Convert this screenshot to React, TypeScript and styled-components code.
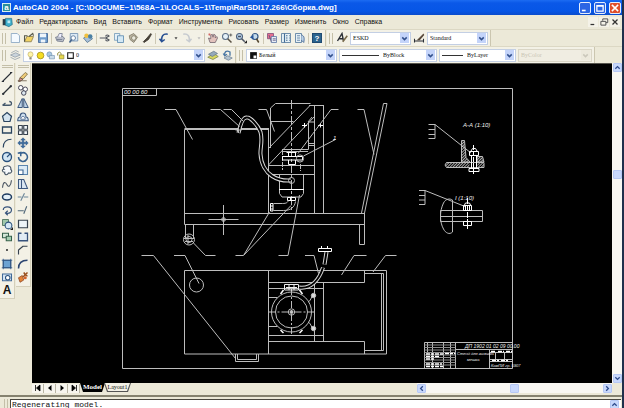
import React from "react";
import styled, { createGlobalStyle } from "styled-components";

const GlobalStyle = createGlobalStyle`
  * { box-sizing: border-box; }
  html, body { margin: 0; padding: 0; overflow: hidden; }
  body { font-family: "Liberation Sans", Arial, sans-serif; font-size: 7px; color: #111; }
  button, select, input { font: inherit; color: inherit; margin: 0; padding: 0; border: 0; background: none; }
`;

const Window = styled.div`
  display: flex;
  flex-direction: column;
  height: 100vh;
  background: #ece9d8;
  border-right: 2px solid #20304c;
`;

const TitleBar = styled.header`
  display: flex;
  align-items: center;
  gap: 2px;
  height: 15px;
  flex: none;
  padding: 0 1px 0 2px;
  background: linear-gradient(#1c6cf2 0, #0a58e8 3px, #0656e6 11px, #0a4ccc 15px);
`;

const AppBadge = styled.span`
  width: 9px;
  height: 9px;
  border: 1px solid #d8f0f0;
  background: #2a8f9c;
  color: #fff;
  font-size: 8px;
  font-weight: bold;
  line-height: 7px;
  text-align: center;
`;

const Title = styled.h1`
  flex: 1;
  margin: 0;
  color: #fff;
  font-family: "Liberation Sans", Arial, sans-serif;
  font-size: 8px;
  font-weight: 700;
  line-height: 12px;
  white-space: nowrap;
`;

const CaptionButton = styled.button<{ $danger?: boolean }>`
  display: flex;
  width: 12px;
  height: 12px;
  margin-left: 1px;
  border: 1px solid #e6eefc;
  border-radius: 2px;
  background: ${(p) => (p.$danger ? "#e0502c" : "#2c66e4")};
  svg { width: 10px; height: 10px; }
`;

const MenuBar = styled.nav`
  display: flex;
  align-items: center;
  gap: 6px;
  height: 14px;
  flex: none;
  padding: 0 2px;
  line-height: 12px;
`;

const DocMark = styled.span`
  display: flex;
  width: 11px;
  margin-right: -3px;
  svg { width: 11px; height: 11px; }
`;

const MenuItem = styled.button`
  white-space: nowrap;
`;

const MdiButtons = styled.div`
  display: flex;
  margin-left: auto;
  gap: 1px;
`;

const MdiButton = styled.button`
  display: flex;
  width: 10px;
  height: 10px;
  background: #f4f2e8;
  svg { width: 10px; height: 10px; }
`;

const ToolRow = styled.div`
  display: flex;
  flex: none;
  height: 17px;
  gap: 1px;
  border-top: 1px solid #dcd8c4;
`;

const Bar = styled.div`
  display: flex;
  align-items: center;
  gap: 2px;
  padding: 0 2px;
  background: #f3f1e6;
  border-right: 1px solid #cbc6b0;
`;

const Grip = styled.span`
  width: 4px;
  height: 11px;
  margin-right: 1px;
  border-left: 1px solid #c4bfa8;
  border-right: 1px solid #c4bfa8;
`;

const Divider = styled.span`
  width: 1px;
  height: 11px;
  background: #cdc8b4;
`;

const ToolButton = styled.button<{ $narrow?: boolean }>`
  display: flex;
  flex: none;
  justify-content: center;
  align-items: center;
  width: ${(p) => (p.$narrow ? 7 : 12)}px;
  height: 12px;
  svg { width: 12px; height: 12px; flex: none; }
`;

const ComboBox = styled.label<{ $width: number; $disabled?: boolean }>`
  display: flex;
  align-items: center;
  gap: 1px;
  width: ${(p) => p.$width}px;
  height: 13px;
  padding: 1px 1px 1px 2px;
  border: 1px solid ${(p) => (p.$disabled ? "#dad6c6" : "#c3cfe4")};
  background: ${(p) => (p.$disabled ? "#f0ede2" : "#fff")};
  color: ${(p) => (p.$disabled ? "#c9c5b4" : "#111")};
  font-family: "Liberation Serif", "Times New Roman", serif;
  font-size: 6px;
  svg { width: 9px; height: 9px; flex: none; }
`;

const Select = styled.select`
  appearance: none;
  flex: 1;
  min-width: 0;
  height: 10px;
  line-height: 10px;
  outline: 0;
  opacity: 1;
`;

const Sample = styled.span<{ $width: number }>`
  width: ${(p) => p.$width}px;
  height: 1px;
  margin-right: 3px;
  background: #333;
`;

const Drop = styled.span<{ $disabled?: boolean }>`
  display: flex;
  align-items: center;
  justify-content: center;
  width: 9px;
  height: 10px;
  flex: none;
  background: ${(p) => (p.$disabled ? "#ece9dc" : "#c4d4fa")};
  color: ${(p) => (p.$disabled ? "#cbc8bb" : "#32508c")};
`;

const Workspace = styled.div`
  display: flex;
  flex: 1;
  min-height: 0;
`;

const Palettes = styled.aside`
  display: flex;
  align-items: flex-start;
  width: 32px;
  flex: none;
`;

const Palette = styled.div`
  display: flex;
  flex-direction: column;
  align-items: center;
  width: 15px;
  margin-right: 1px;
  padding: 2px 0 2px;
  gap: 2px;
  background: #f3f1e6;
  border: 1px solid #d4cfba;
  border-width: 0 1px 1px 0;
`;

const PaletteGrip = styled.span`
  width: 11px;
  height: 3px;
  border-top: 1px solid #c4bfa8;
  border-bottom: 1px solid #c4bfa8;
`;

const PaletteGroup = styled.div`
  display: flex;
  flex-direction: column;
  padding-bottom: 1px;
  button { height: 13px; }
`;

const DrawingPane = styled.main`
  display: flex;
  flex-direction: column;
  flex: 1;
  min-width: 0;
`;

const CanvasRow = styled.div`
  display: flex;
  flex: 1;
  min-height: 0;
`;

const Canvas = styled.div`
  flex: 1;
  min-width: 0;
  background: #000;
  border-top: 1px solid #55534c;
  svg { display: block; width: 100%; height: 100%; }
`;

const ScrollTrack = styled.div<{ $horizontal?: boolean }>`
  display: flex;
  flex: none;
  flex-direction: ${(p) => (p.$horizontal ? "row" : "column")};
  align-items: center;
  ${(p) => (p.$horizontal ? "width: 195px; height: 10px;" : "width: 10px;")}
  background: #f8f7f2;
`;

const Space = styled.span<{ $grow?: number }>`
  flex: ${(p) => p.$grow ?? 1};
`;

const ScrollButton = styled.button`
  display: flex;
  flex: none;
  align-items: center;
  justify-content: center;
  width: 9px;
  height: 9px;
  border: 1px solid #b6c8f4;
  border-radius: 1px;
  background: #c8d8fc;
  color: #2f4c8c;
  svg { width: 7px; height: 7px; flex: none; }
`;

const BottomRow = styled.div`
  display: flex;
  flex: none;
  height: 12px;
  padding-right: 10px;
`;

const TabNav = styled.div`
  display: flex;
  align-items: center;
  height: 10px;
  button {
    display: flex;
    width: 12px;
    height: 9px;
    justify-content: center;
    align-items: center;
    border-right: 1px solid #b9b5a4;
    background: #f7f5ee;
  }
  svg { width: 8px; height: 8px; }
`;

const Tab = styled.button<{ $active?: boolean }>`
  height: 9px;
  width: ${(p) => (p.$active ? 25 : 27)}px;
  background: ${(p) => (p.$active ? "#000" : "#555")};
  clip-path: polygon(0 0, 100% 0, calc(100% - 3px) 100%, 3px 100%);
  color: ${(p) => (p.$active ? "#fff" : "#111")};
  font-family: "Liberation Serif", serif;
  font-size: ${(p) => (p.$active ? 7 : 6)}px;
  font-weight: ${(p) => (p.$active ? 700 : 400)};
  line-height: 8px;
  padding: 0 1px 1px;
  margin-right: -1px;
  span {
    display: block;
    height: 8px;
    background: ${(p) => (p.$active ? "#000" : "#f3f1e6")};
    clip-path: polygon(0 0, 100% 0, calc(100% - 3px) 100%, 3px 100%);
  }
`;

const CommandPane = styled.section`
  display: flex;
  flex: none;
  height: 13px;
  padding: 2px 1px 0 4px;
  border-top: 2px solid #85826f;
`;

const CommandBox = styled.div`
  display: flex;
  flex: 1;
  margin-left: 1px;
  padding-right: 2px;
  border-top: 1px solid #4a4840;
  border-left: 1px solid #4a4840;
  background: #fff;
`;

const CommandInput = styled.input`
  flex: 1;
  min-width: 0;
  height: 8px;
  padding-left: 1px;
  outline: 0;
  font-family: "Liberation Mono", "Courier New", monospace;
  font-size: 8px;
  line-height: 8px;
`;

const HelpBadge = styled.span`
  width: 10px;
  height: 10px;
  background: #2c648e;
  border: 1px solid #1f4a72;
  color: #fff;
  font-size: 8px;
  font-weight: 700;
  line-height: 9px;
  text-align: center;
`;

const TextGlyph = styled.span`
  font-size: 12px;
  line-height: 12px;
  font-weight: 700;
`;

const K = "#2a2f36";
const B = "#3c6da0";

const glyphs: Record<string, React.ReactNode> = {
  newFile: <path d="M3 2h8l3 3v9H3z" fill="#f4faff" stroke="#7c9cbc" />,
  open: <><path d="M2 13l3-7h9l-3 7z" fill="#f0d264" stroke="#83754a" /><path d="M2 13V5h4M8 6l5-4 1 3" fill="none" stroke="#55584a" strokeWidth="1.4" /></>,
  save: <><path d="M2 2h12v12H2z" fill="#6f9ccc" stroke="#345a8c" /><path d="M4 2h8v5H4zM5 10h6v4H5z" fill="#eef5fb" /></>,
  print: <><path d="M2 7l8-2 4 3-2 5-8-1z" fill="#b9bdc8" stroke="#6a7184" /><path d="M5 6l2-4h4l-1 5M4 10h7" fill="#eef" stroke="#6a7184" /></>,
  preview: <><path d="M3 2h10v10H3z" fill="#dceaf6" stroke="#6485ac" /><circle cx="7" cy="8" r="3" fill="#fff" stroke="#46658c" /><path d="M5 10l-3 4" stroke="#46658c" strokeWidth="2" /></>,
  publish: <><path d="M2 8l8-4 4 5-7 5z" fill="#a8c0d8" stroke="#4b6c8c" /><circle cx="6" cy="5" r="3" fill="#f0c040" /><circle cx="11" cy="6" r="3" fill="#4a80a4" /></>,
  cut: <path d="M1 8h8l5-3M9 8l5 3M9 6a2 2 0 114 0M9 10a2 2 0 104 0" fill="none" stroke="#50555e" strokeWidth="1.6" />,
  copy: <><path d="M2 2h7v9H2z" fill="#e4f0f8" stroke="#6a93b4" /><path d="M6 5h8v9H6z" fill="#d4e8f4" stroke="#4f80aa" /></>,
  paste: <><path d="M3 5l6-3 5 5-5 7-5-4z" fill="#bdb7a4" stroke="#77725f" /><circle cx="9" cy="8" r="3" fill="#e9e8dc" stroke="#77725f" /></>,
  brush: <path d="M13 2L8 8l-5 5 1 1 6-4 4-7z" fill="#4a4338" stroke="#37322b" />,
  undo: <path d="M13 3C7 2 4 5 5 13M2 9l3 4 4-3" fill="none" stroke="#274f92" strokeWidth="2" />,
  redo: <path d="M3 3c6-1 9 2 8 10M14 9l-3 4-4-3" fill="none" stroke="#c7cbd0" strokeWidth="2" />,
  drop: <path d="M6 7h4l-2 3z" fill="#444" />,
  dropOff: <path d="M6 7h4l-2 3z" fill="#bbb" />,
  pan: <><path d="M4 14l-2-6 3 1V4l2-1 1 4 1-4 2 1v4l2-2 1 2-3 6z" fill="#e3c3bd" stroke="#6b5d68" /><path d="M2 3h3M3 2v3" stroke="#c44" /></>,
  zoomRt: <><circle cx="6" cy="6" r="4" fill="#e6f2fa" stroke="#5b6f88" strokeWidth="1.4" /><path d="M9 9l5 5" stroke="#5a5245" strokeWidth="2" /><path d="M11 4h4M13 2v4" stroke="#444" /></>,
  zoomWin: <><circle cx="6" cy="6" r="4" fill="#bcd5ea" stroke="#4d607c" strokeWidth="1.4" /><path d="M4 6h4M9 9l4 4" stroke="#4d5564" strokeWidth="2" /><path d="M12 15h4v-4z" fill="#222" /></>,
  zoomPrev: <><circle cx="8" cy="6" r="4" fill="#c6dcec" stroke="#345886" strokeWidth="1.6" /><path d="M10 9l3 5" stroke="#54462f" strokeWidth="2" /><path d="M1 7l5-3v6z" fill="#28579b" /></>,
  props: <><path d="M2 2h8v7H2z" fill="#e66f90" stroke="#7a4a76" /><path d="M7 6h7v8H7z" fill="#e7eef8" stroke="#5470a0" /><path d="M4 4l3 9M9 9h4M9 11h4" stroke="#594d77" /></>,
  center: <><path d="M2 2h12v12H2z" fill="#e6f0f6" stroke="#456e96" /><path d="M6 2v12M8 5h2M12 5h1M8 8h2M12 8h1M8 11h2M12 11h1" stroke="#456e96" strokeWidth="1.5" /></>,
  palettes: <><path d="M2 2h8v12H2z" fill="#e6f0f6" stroke="#456e96" /><path d="M4 5h4M4 8h4M4 11h4" stroke="#456e96" /><path d="M10 4c4 1 4 5 3 10l-3-3" fill="#bcd0e6" stroke="#31588b" /></>,
  textStyle: <><path d="M2 12L8 2l2 10M4 9h6" fill="none" stroke={K} strokeWidth="1.8" /><path d="M9 13l6-8" stroke="#776a4b" strokeWidth="2" /></>,
  dimStyle: <><path d="M2 12h12M2 9v5M14 9v5" stroke={K} strokeWidth="1.4" /><path d="M5 11l3-3 6-6 1 2-6 7z" fill="#57483a" /></>,
  layers: <><path d="M2 8l7-3 6 3-7 3z" fill="#cad4dc" stroke="#8d99a4" /><path d="M2 11l6 3 7-3M3 5l6-3 4 2" fill="none" stroke="#8d99a4" /></>,
  bulb: <><circle cx="8" cy="6" r="4.5" fill="#fff4a8" stroke="#b5a25a" /><path d="M6 11h4v4H6z" fill="#8f8c7c" /></>,
  sun: <circle cx="8" cy="8" r="6" fill="#f5dc20" stroke="#a79424" strokeWidth="1.5" />,
  vpSun: <><circle cx="6" cy="6" r="4.5" fill="#a9c8e2" stroke="#6686a8" /><path d="M6 8h9v6H6z" fill="#c9dbe9" stroke="#6686a8" /></>,
  lock: <><path d="M6 7h8v7H6z" fill="#e6d84c" stroke="#76702a" /><path d="M3 8V4l3-2 3 2v3" fill="none" stroke="#8b8430" strokeWidth="1.6" /></>,
  swatch: <path d="M3 3h10v10H3z" fill="#fff" stroke="#222" strokeWidth="2" />,
  bw: <><path d="M2 2h12v12H2z" fill="#111" /><path d="M8 8h5v5H8z" fill="#fff" /></>,
  layerObj: <><path d="M1 11l8-5 6 4-7 4z" fill="#d7d75e" stroke="#78804a" /><path d="M2 7l7-4 5 3-7 4z" fill="#94a9bb" stroke="#667888" /></>,
  layerPrev: <><path d="M4 12l5-3 6 3-5 3z" fill="#b4c3cf" stroke="#6f8395" /><path d="M12 9V4c-5-3-8 0-7 5M3 6l2 3 3-2" fill="none" stroke="#4c78a4" strokeWidth="1.8" /></>,
  line: <path d="M2 14L14 2M1 14h3M12 2h3" fill="none" stroke={K} strokeWidth="1.5" />,
  xline: <><path d="M2 14L14 2" stroke={K} strokeWidth="1.7" /><circle cx="3" cy="13" r="1.5" fill={K} /><circle cx="13" cy="3" r="1.5" fill={K} /></>,
  pline: <path d="M2 11h9c4 0 4-5 0-5M2 11l4-3" fill="none" stroke="#44586c" strokeWidth="1.7" />,
  polygon: <path d="M8 2l6 5-2 7H4L2 7z" fill="#d4e4f0" stroke="#2b4560" strokeWidth="1.6" />,
  rect: <path d="M2 4h12v8H2z" fill="none" stroke="#2b4560" strokeWidth="1.7" />,
  arc: <path d="M3 14C3 7 7 3 14 3" fill="none" stroke="#2b4560" strokeWidth="1.6" />,
  circle: <><circle cx="8" cy="8" r="6" fill="#d2e6f4" stroke="#28507c" strokeWidth="1.8" /><path d="M8 8l4-4" stroke="#28507c" strokeWidth="1.5" /></>,
  cloud: <path d="M6 3c4-2 8 1 7 4 3 3 0 6-3 5-2 4-6 2-5-1-4 0-4-4-1-4-2-2 0-4 2-4z" fill="#f6f9fb" stroke="#495868" strokeWidth="1.5" />,
  spline: <path d="M2 13c1-9 4-8 6-4s5 2 6-6" fill="none" stroke="#4b5663" strokeWidth="1.5" />,
  ellipse: <ellipse cx="8" cy="8" rx="6" ry="4" fill="#e4f0f8" stroke="#1f3c60" strokeWidth="2" />,
  earc: <path d="M3 8c0-6 11-5 11 0 0 4-4 5-7 4M9 9l-3 3 3 3" fill="none" stroke="#38547c" strokeWidth="1.6" />,
  insert: <><path d="M2 2h8v8H2z" fill="#9fc7aa" stroke="#35604a" /><circle cx="10" cy="10" r="4.500" fill="#d6e8f4" stroke="#28507c" strokeWidth="1.4" /><path d="M12 16h4v-4z" fill="#222" /></>,
  block: <><path d="M2 3h8v6H2z" fill="#d7e8da" stroke="#35604a" strokeWidth="1.4" /><path d="M7 7h7v6H7z" fill="#a6ceb2" stroke="#35604a" strokeWidth="1.4" /></>,
  point: <circle cx="8" cy="8" r="1.4" fill="#333" />,
  hatch: <><path d="M3 3h10v10H3z" fill="#6ca2d2" stroke="#2d5382" strokeWidth="1.4" /><path d="M1 3h14M1 13h14M3 1v14M13 1v14" stroke="#2d5382" /></>,
  region: <><path d="M2 4h12v9H2z" fill="#d6e6f4" stroke="#416a98" strokeWidth="1.4" /><circle cx="9" cy="9" r="3" fill="#fff" stroke="#28507c" strokeWidth="1.4" /></>,
  erase: <><path d="M4 9l7-7 3 2-6 7z" fill="#eecb78" stroke="#72633d" /><path d="M1 13h12M4 9l4 2-4 3H2z" fill="#db8f8f" stroke="#61503d" /></>,
  copyObj: <><circle cx="5" cy="5" r="3" fill="#fff" stroke="#445" strokeWidth="1.3" /><circle cx="11" cy="7" r="3" fill="#fff" stroke="#445" strokeWidth="1.3" /><circle cx="9" cy="12" r="3" fill="#dde8f0" stroke="#445" strokeWidth="1.3" /></>,
  mirror: <path d="M7 2v12H1zM9 2v12h6z" fill="#bdd2e6" stroke="#38547c" strokeWidth="1.3" />,
  offset: <><path d="M1 13c0-4 2-5 3-5 0-7 8-7 8 0 2 0 3 2 3 5z" fill="#cfe0ef" stroke="#38547c" strokeWidth="1.4" /><path d="M5 11c0-5 6-5 6 0z" fill="#fff" stroke="#38547c" /></>,
  array: <path d="M2 2h5v5H2zM9 2h5v5H9zM2 9h5v5H2zM9 9h5v5H9z" fill="#f4f8fb" stroke="#37424f" strokeWidth="1.5" />,
  move: <path d="M8 1l3 3H9v3h3V5l3 3-3 3V9H9v3h2l-3 3-3-3h2V9H4v2L1 8l3-3v2h3V4H5z" fill={B} stroke="#264f7e" strokeWidth=".6" />,
  rotate: <path d="M4 4c6-5 12 2 9 7-3 5-11 3-11-3M1 3l4-1v5" fill="none" stroke="#38628f" strokeWidth="2" />,
  scale: <><path d="M2 2h12v12H2z" fill="#dcebf6" stroke="#5c86ae" strokeWidth="1.4" /><path d="M2 8h6v6H2z" fill="#fff" stroke="#38628f" strokeWidth="1.4" /></>,
  stretch: <path d="M2 2h4v12H2zM6 2h3l5 12H6z" fill="#dbe7f2" stroke="#3e5980" strokeWidth="1.4" />,
  trim: <path d="M1 8h5M9 8h6M5 13l5-10" fill="none" stroke="#6d8799" strokeWidth="1.5" />,
  extend: <path d="M1 9h8M9 13l4-10" fill="none" stroke="#52687a" strokeWidth="1.5" />,
  breakPt: <path d="M2 3h12v10H2z" fill="#eef4f8" stroke="#37424f" strokeWidth="1.6" />,
  breakObj: <path d="M6 3H2v10h12V3h-4" fill="#e1ebf4" stroke="#37527c" strokeWidth="1.7" />,
  chamfer: <path d="M2 14V8l6-5h6M2 8l6-5" fill="none" stroke="#37424f" strokeWidth="1.5" />,
  fillet: <path d="M2 14C2 7 6 3 14 3" fill="none" stroke="#2c4672" strokeWidth="2" />,
  explode: <><path d="M2 9l5-3 2 6-5 3z" fill="#e28236" stroke="#8c4420" /><path d="M8 8l6-6M9 2l2 3 3 2" stroke="#99501f" strokeWidth="2" /><circle cx="11" cy="9" r="2" fill="#d4622a" /></>,
  chevron: <path d="M4 6l4 4 4-4" fill="none" stroke="currentColor" strokeWidth="2.6" />,
  up: <path d="M3 11l5-5 5 5" fill="none" stroke="currentColor" strokeWidth="3" />,
  down: <path d="M3 5l5 5 5-5" fill="none" stroke="currentColor" strokeWidth="3" />,
  left: <path d="M11 3L6 8l5 5" fill="none" stroke="currentColor" strokeWidth="3" />,
  right: <path d="M5 3l5 5-5 5" fill="none" stroke="currentColor" strokeWidth="3" />,
  first: <path d="M3 2v12M12 2v12L5 8z" fill="#000" stroke="#000" strokeWidth="1.6" />,
  prev: <path d="M11 2v12L4 8z" fill="#000" />,
  next: <path d="M5 2v12l7-6z" fill="#000" />,
  last: <path d="M4 2v12l7-6zM13 2v12" fill="#000" stroke="#000" strokeWidth="1.6" />,
  winMin: <path d="M3 12h6" stroke="#fff" strokeWidth="2.6" />,
  winMax: <path d="M3 4h10v9H3zM3 5h10" fill="none" stroke="#fff" strokeWidth="2" />,
  winClose: <path d="M3 3l10 10M13 3L3 13" stroke="#fff" strokeWidth="2.4" />,
  mdiMin: <path d="M4 12h6" stroke="#333" strokeWidth="2" />,
  mdiRestore: <path d="M6 6V3h8v6h-3M3 7h8v6H3z" fill="none" stroke="#555" strokeWidth="1.6" />,
  mdiClose: <path d="M4 4l8 8M12 4l-8 8" stroke="#333" strokeWidth="2" />,
  doc: <><path d="M1 3h6v9H1z" fill="#2c3d46" /><path d="M5 2h9l1 9-5 3-5-2z" fill="#3eb0cc" stroke="#236c86" /><path d="M8 5h4v4H8z" fill="#bfeaf4" /></>,
};

const Glyph = ({ name }: { name: string }) => (
  <svg viewBox="0 0 16 16" aria-hidden="true">{glyphs[name]}</svg>
);

const Tool = ({ name }: { name: string }) => (
  <ToolButton type="button" aria-label={name} $narrow={name.startsWith("drop")}>
    <Glyph name={name} />
  </ToolButton>
);

interface ComboProps {
  label: string;
  value: string;
  width: number;
  icons?: string[];
  sample?: number;
  disabled?: boolean;
}

const Combo = ({ label, value, width, icons = [], sample, disabled }: ComboProps) => (
  <ComboBox $width={width} $disabled={disabled}>
    {icons.map((i) => <Glyph key={i} name={i} />)}
    {sample ? <Sample $width={sample} /> : null}
    <Select aria-label={label} disabled={disabled} defaultValue={value}>
      <option>{value}</option>
    </Select>
    <Drop $disabled={disabled}><Glyph name="chevron" /></Drop>
  </ComboBox>
);

const menus = ["Файл", "Редактировать", "Вид", "Вставить", "Формат", "Инструменты", "Рисовать", "Размер", "Изменить", "Окно", "Справка"];

const standardTools = [
  ["newFile", "open", "save"],
  ["print", "preview", "publish"],
  ["cut", "copy", "paste", "brush"],
  ["undo", "drop", "redo", "dropOff"],
  ["pan", "zoomRt", "zoomWin", "zoomPrev"],
  ["props", "center", "palettes"],
];

const drawTools = [
  ["line", "xline", "pline"],
  ["polygon", "rect", "arc"],
  ["circle", "cloud"],
  ["spline", "ellipse", "earc"],
  ["insert", "block", "point"],
  ["hatch", "region"],
];

const modifyTools = [
  ["erase", "copyObj", "mirror"],
  ["offset", "array", "move"],
  ["rotate", "scale"],
  ["stretch", "trim", "extend"],
  ["breakPt", "breakObj", "chamfer"],
  ["fillet", "explode"],
];

const Tube = ({ d, width = 4 }: { d: string; width?: number }) => (
  <>
    <path d={d} stroke="#d8d8d8" strokeWidth={width} />
    <path d={d} stroke="#000" strokeWidth={width - 2} />
  </>
);

const Drawing = () => (
  <svg viewBox="32 64 580 319" preserveAspectRatio="xMinYMin meet" role="img" aria-label="Сборка">
    <defs>
      <pattern id="hatch" width="2" height="2" patternUnits="userSpaceOnUse" patternTransform="rotate(45)">
        <path d="M0 0v2" stroke="#ddd" strokeWidth="1.6" />
      </pattern>
    </defs>
    <g fill="none" stroke="#bdbdbd" strokeWidth="1">
      {/* sheet frame */}
      <path d="M122.5 88.5h390v280h-390zM122.5 95.5h34v-7" />

      {/* front view: cabinet and table */}
      <path d="M184.5 224.5V129.5h84.5M184.5 128.5h84.5M268.5 129v84M184.5 213.5h180M184.5 224.5h180M364.5 213v31.5h-5v-20" />
      <path d="M361.5 213l22-109.5h3.5l-22.5 109.5" />
      <path d="M314.5 105v108M323.5 105v108M309 105.5h14.5" />
      <path d="M185.5 225v13M193.5 225v13" />
      <circle cx="189" cy="239.5" r="5.5" />
      <circle cx="189" cy="239.5" r="3" />
      <path d="M184 238.5h10M185 241.5h8M188 235v9" />

      {/* motor */}
      <path d="M270.5 148v-40l5-4.5h35M270.5 121.5h23M268.5 148.5l42-43.5M268.5 165l46-48.5" />
      <path d="M282 149.5h26.5v-27.5h6M282 151.5h26M308 145.5h7M308 143.5h6M308 122l4-5" />
      <path d="M268.5 165.5h46M268.5 174.5h46" />
      <path d="M282.5 150v20M300.5 164v7" strokeDasharray="5 1" />
      <path d="M302 125.5h5M304.500 123v4.500M318 125.500h5M320.500 123v4.500" stroke="#fff" />
      <path d="M291.5 100v112" strokeDasharray="9 2 3 2" />
      <path d="M286.5 152.5h10M288.5 153v3.5M295.5 153v3.5M282.5 156.5h20v3.5h-20zM288.5 160v4.5h7v-4.5" stroke="#fff" />
      <circle cx="300" cy="158.5" r="3.6" />

      {/* vessel and outlet */}
      <path d="M279.5 174.5v19l2.5 3.5h19l2.5-3.5v-19" />
      <path d="M279 189.5h25" stroke="#fff" />
      <path d="M287.5 197.5h8v3h-8zM290.5 197v4M270.5 203.5h2.5v7.5h-2.5zM270 206h3M270 209h3" stroke="#fff" />
      <path d="M273.5 203.5h9c4 0 5-1 6-3M273.5 210.5h10c7 0 11-3 12-9" />

      <Tube d="M238.5 133C241 121 244 117 247 117.5C250 117 258 125 260.5 132C263 141 260 148 260.5 154C261 164 266 172 272 176C278 180 284 181 291 180.5" />
      <circle cx="291.5" cy="180.5" r="3" />
      <path d="M235.5 130h6M238.5 127v6" />

      {/* leaders of the front view */}
      <path d="M165 109.5h11l16.5 30M210.5 109.5h10l19 17M223.5 109.5h8l12 12M258.5 109.5h8l8 22M338.5 109.5h-7.5l-33 44M357.5 109.5h6.5l10 45" />
      <path d="M303.5 156l32-16.5h-2" />
      <path d="M193.5 243l12 12.5h10M235.5 255.5h8l26-43.5M244 255l47-49.5M278.5 255.5h9.5l11.5-60.5" />
      <path d="M208.5 219.5h30M223.5 205v30M222 218h3v3h-3z" />

      {/* plan view */}
      <path d="M184.5 270.5h202v83.5h-202zM268.5 270.5v83.5M268.5 282.5h96v-12M268.5 341.5h96v12.5M364.5 273.5h19v77h-19M381.5 273.5v77" />
      <path d="M314.5 282.5v59M323.5 282.5v59M268.5 288.5h55M268.5 297.5h9M268.5 326.5h9M268.5 335.5h55" />
      <circle cx="291.5" cy="312" r="20" />
      <circle cx="291.5" cy="312" r="16" />
      <circle cx="291.5" cy="312" r="3.2" />
      <circle cx="291.5" cy="312" r="1.5" fill="#ddd" />
      <path d="M268.5 312h46M291.5 288v47" strokeDasharray="7 2 2 2" />
      <path d="M280.5 294l3-4M299.5 290l3 4M280.500 330l3 3M302.500 330l-3 3" stroke="#fff" strokeWidth="1.5" />
      <path d="M284.5 284.5h14v5.5h-14zM289 284.5v5.5M294 284.5v5.5M286 287.5h11" stroke="#eee" />
      <path d="M308 302c3-1 3-5 5-7M308 322c3 1 3 5 5 7" />
      <circle cx="313.5" cy="295.5" r="2.2" fill="#ddd" />
      <circle cx="313.5" cy="328.5" r="2.2" fill="#ddd" />
      <Tube d="M299 287.5C311 289 319 280 323 267.5" />
      <Tube d="M324.5 264.5L326.5 252" />
      <path d="M318.5 248.5h13v3h-13zM321.5 246v2M327.5 246v2" stroke="#fff" />
      <path d="M305 255.5h9l4.5 18M341.5 275l12.5-19.5h12.5M373 272l12.5-16.5h11" />
      <circle cx="196.5" cy="285" r="7" />
      <path d="M174 255.5h11l14 28M141.5 255.5h12l82 103" />
      <path d="M235.5 354v7.5h23v-7.5M237.5 354v5.5h19v-5.5" />

      {/* section A-A */}
      <path d="M428.5 124.5h6.5v14h-6.5M428.5 129.5h6.5M428.5 134.5h6.5M435 124.5l36 28.5" />
      <path d="M461.5 162V140.5h3l1.5 17 4 4.5z" fill="url(#hatch)" />
      <path d="M446.5 162.5h37.5v5h-37.5l-1.5-2.5z" fill="url(#hatch)" />
      <path d="M477 156.5h5.5l1.5 5.5h-7z" fill="url(#hatch)" />
      <path d="M469.500 163h8v4h-8z" fill="#000" stroke="none" />
      <path d="M469.5 151.5h9v4h-9zM471 151l1.5-2.5h3l1.5 2.5M471.5 155.5v13M476.5 155.5v13M469 168.500h10v3h-10zM473.500 168v3" stroke="#fff" />
      <path d="M473.5 145v29" stroke="#fff" strokeDasharray="5 1" />

      {/* detail I */}
      <path d="M419 190.5h6v14h-6M419 195.5h6M419 200h6M425 190.5l40 16" />
      <path d="M452.5 200c-3-2-7-1-9 3-4 8-4 19 0 26 2 4 6 6 9 3zM440.5 210.5h42v11h-42zM440.5 216.5h42" />
      <path d="M463.5 205.5h8v5h-8zM465.5 205.5v5M469.5 205.5v5M464.5 205l1-2h4l1 2M463.5 221.5h8v4h-8zM467.5 221.5v4" stroke="#fff" />
      <path d="M467.5 198v31" stroke="#fff" strokeDasharray="6 1" />

      {/* title block */}
      <path d="M424.5 368.5v-26h88M427.5 342.5v11M432.5 342.5v26M443.5 342.5v26M450.5 342.5v26M455.5 342.5v26M489.5 349.5v19M455.5 349.5h57M489.5 361.5h23M489.5 352.5h23M495.5 352.5v7M504.5 352.5v7M489.5 359.5h23" />
      <path d="M424.5 345h31M424.5 347.5h31M424.5 350h31M424.5 352.5h31M424.5 355h31M424.5 357.5h31M424.5 360h31M424.5 362.5h31M424.5 365h31" stroke="#8c8c8c" />
      <path d="M426 354h17M426 356.5h14M445 353.5h10M426 359h8M426 364h16M426 366.5h17M491 351.5h5M498 351.5h6M506 351.5h6M492 360.5h7M501 360.5h7" stroke="#fff" strokeWidth="1.5" strokeDasharray="4 1 3 1" />
    </g>
    <g fill="#f2f2f2" fontFamily="Liberation Sans, Arial, sans-serif" fontStyle="italic" fontSize="6">
      <text x="124" y="94">00 00 60</text>
      <text x="463" y="127">А-А (1:10)</text>
      <text x="455" y="200">I (1:10)</text>
      <text x="333" y="140">1</text>
      <text x="465" y="348" fontSize="5">ДП 1902 01 02 09 00.00</text>
      <text x="457" y="355" fontSize="4">Стенд для выжима</text>
      <text x="467" y="361" fontSize="4">мешка</text>
      <text x="491" y="367" fontSize="4">КамПИ гр. 5907</text>
    </g>
  </svg>
);

export default function App() {
  return (
    <>
      <GlobalStyle />
      <Window>
        <TitleBar>
          <AppBadge>a</AppBadge>
          <Title>AutoCAD 2004 - [C:\DOCUME~1\568A~1\LOCALS~1\Temp\RarSDI17.266\Сборка.dwg]</Title>
          <CaptionButton type="button" aria-label="Свернуть"><Glyph name="winMin" /></CaptionButton>
          <CaptionButton type="button" aria-label="Развернуть"><Glyph name="winMax" /></CaptionButton>
          <CaptionButton type="button" aria-label="Закрыть" $danger><Glyph name="winClose" /></CaptionButton>
        </TitleBar>

        <MenuBar>
          <DocMark><Glyph name="doc" /></DocMark>
          {menus.map((m) => <MenuItem key={m} type="button">{m}</MenuItem>)}
          <MdiButtons>
            {["mdiMin", "mdiRestore", "mdiClose"].map((n) => (
              <MdiButton key={n} type="button" aria-label={n}><Glyph name={n} /></MdiButton>
            ))}
          </MdiButtons>
        </MenuBar>

        <ToolRow>
          <Bar>
            <Grip />
            {standardTools.map((group, i) => (
              <React.Fragment key={i}>
                {i > 0 && <Divider />}
                {group.map((n) => <Tool key={n} name={n} />)}
              </React.Fragment>
            ))}
            <Divider />
            <ToolButton type="button" aria-label="Справка"><HelpBadge>?</HelpBadge></ToolButton>
          </Bar>
          <Bar>
            <Grip />
            <Tool name="textStyle" />
            <Combo label="Текстовый стиль" value="ESKD" width={61} />
            <Tool name="dimStyle" />
            <Combo label="Размерный стиль" value="Standard" width={61} />
          </Bar>
        </ToolRow>

        <ToolRow>
          <Bar>
            <Grip />
            <Tool name="layers" />
            <Combo label="Слой" value="0" width={182} icons={["bulb", "sun", "vpSun", "lock", "swatch"]} />
            <Tool name="layerObj" />
            <Tool name="layerPrev" />
          </Bar>
          <Bar>
            <Grip />
            <Combo label="Цвет" value="Белый" width={91} icons={["bw"]} />
            <Combo label="Тип линии" value="ByBlock" width={98} sample={37} />
            <Combo label="Вес линии" value="ByLayer" width={77} sample={21} />
            <Combo label="Стиль печати" value="ByColor" width={74} disabled />
          </Bar>
        </ToolRow>

        <Workspace>
          <Palettes>
            <Palette>
              <PaletteGrip />
              <div>
                {drawTools.map((g, i) => (
                  <PaletteGroup key={i}>{g.map((n) => <Tool key={n} name={n} />)}</PaletteGroup>
                ))}
                <ToolButton type="button" aria-label="Текст"><TextGlyph>A</TextGlyph></ToolButton>
              </div>
            </Palette>
            <Palette>
              <PaletteGrip />
              <div>
                {modifyTools.map((g, i) => (
                  <PaletteGroup key={i}>{g.map((n) => <Tool key={n} name={n} />)}</PaletteGroup>
                ))}
              </div>
            </Palette>
          </Palettes>

          <DrawingPane>
            <CanvasRow>
              <Canvas><Drawing /></Canvas>
              <ScrollTrack>
                <ScrollButton type="button" aria-label="Вверх"><Glyph name="up" /></ScrollButton>
                <Space />
                <ScrollButton type="button" aria-label="Вертикальный ползунок" />
                <Space $grow={2} />
                <ScrollButton type="button" aria-label="Вниз"><Glyph name="down" /></ScrollButton>
              </ScrollTrack>
            </CanvasRow>
            <BottomRow>
              <TabNav>
                {["first", "prev", "next", "last"].map((n) => (
                  <button key={n} type="button" aria-label={n}><Glyph name={n} /></button>
                ))}
              </TabNav>
              <Tab type="button" $active><span>Model</span></Tab>
              <Tab type="button"><span>Layout1</span></Tab>
              <Space />
              <ScrollTrack $horizontal>
                <ScrollButton type="button" aria-label="Влево"><Glyph name="left" /></ScrollButton>
                <Space />
                <ScrollButton type="button" aria-label="Горизонтальный ползунок" />
                <Space />
                <ScrollButton type="button" aria-label="Вправо"><Glyph name="right" /></ScrollButton>
              </ScrollTrack>
            </BottomRow>
          </DrawingPane>
        </Workspace>

        <CommandPane>
          <Grip />
          <CommandBox>
            <CommandInput aria-label="Командная строка" defaultValue="Regenerating model." />
            <ScrollButton type="button" aria-label="Прокрутить вверх"><Glyph name="up" /></ScrollButton>
          </CommandBox>
        </CommandPane>
      </Window>
    </>
  );
}
